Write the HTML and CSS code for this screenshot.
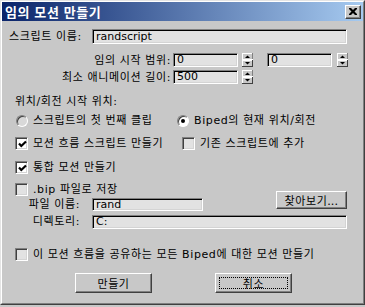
FILE: index.html
```html
<!DOCTYPE html>
<html lang="ko">
<head>
<meta charset="utf-8">
<title>임의 모션 만들기</title>
<link rel="stylesheet" href="styles.css">
</head>
<body>
<div class="window">
  <div class="frame">
    <div class="titlebar">
      <span class="title">임의 모션 만들기</span>
      <div class="close">
        <svg width="8" height="7" viewBox="0 0 8 7"><path d="M0 0h2l2 2 2-2h2v1l-2.5 2.5L8 6v1H6L4 5 2 7H0V6l2.5-2.5L0 1z" fill="#000"/></svg>
      </div>
    </div>
    <div class="content">
      <div class="row row-name">
        <span class="lbl lbl-name">스크립트 이름:</span>
        <div class="tb tb-wide">randscript</div>
      </div>
      <div class="row row-num first-num">
        <span class="lbl lbl-num">임의 시작 범위:</span>
        <div class="tb tb-num">0</div>
        <svg class="spin" width="11" height="14" viewBox="0 0 11 14"><rect width="11" height="14" fill="#c8c8c8"/><path d="M0 0h11M0 0v7" stroke="#fff" stroke-width="2" fill="none"/><path d="M0 6.5h11M10.5 0v7" stroke="#808080" fill="none"/><path d="M0 7h11M0 7v7" stroke="#fff" stroke-width="2" fill="none"/><path d="M0 13.5h11M10.5 7v7" stroke="#404040" fill="none"/><path d="M3 5h5L5.5 2.5z" fill="#000"/><path d="M3 9h5l-2.5 2.5z" fill="#000"/></svg>
        <div class="tb tb-num gap-wide">0</div>
        <svg class="spin spin-b" width="11" height="14" viewBox="0 0 11 14"><rect width="11" height="14" fill="#c8c8c8"/><path d="M0 0h11M0 0v7" stroke="#fff" stroke-width="2" fill="none"/><path d="M0 6.5h11M10.5 0v7" stroke="#808080" fill="none"/><path d="M0 7h11M0 7v7" stroke="#fff" stroke-width="2" fill="none"/><path d="M0 13.5h11M10.5 7v7" stroke="#404040" fill="none"/><path d="M3 5h5L5.5 2.5z" fill="#000"/><path d="M3 9h5l-2.5 2.5z" fill="#000"/></svg>
      </div>
      <div class="row row-num second-num">
        <span class="lbl lbl-num">최소 애니메이션 길이:</span>
        <div class="tb tb-num">500</div>
        <svg class="spin" width="11" height="14" viewBox="0 0 11 14"><rect width="11" height="14" fill="#c8c8c8"/><path d="M0 0h11M0 0v7" stroke="#fff" stroke-width="2" fill="none"/><path d="M0 6.5h11M10.5 0v7" stroke="#808080" fill="none"/><path d="M0 7h11M0 7v7" stroke="#fff" stroke-width="2" fill="none"/><path d="M0 13.5h11M10.5 7v7" stroke="#404040" fill="none"/><path d="M3 5h5L5.5 2.5z" fill="#000"/><path d="M3 9h5l-2.5 2.5z" fill="#000"/></svg>
      </div>
      <div class="row row-section">위치/회전 시작 위치:</div>
      <div class="row row-radio">
        <label class="opt opt-radio1"><span class="radio"></span><span>스크립트의 첫 번째 클립</span></label>
        <label class="opt"><span class="radio on"></span><span>Biped의 현재 위치/회전</span></label>
      </div>
      <div class="row row-check1">
        <label class="opt opt-check1"><span class="check on"><svg width="9" height="9" viewBox="0 0 9 9"><path d="M1 3.5l2.3 2.5L8 1.5" stroke="#000" stroke-width="2.2" fill="none"/></svg></span><span>모션 흐름 스크립트 만들기</span></label>
        <label class="opt"><span class="check"></span><span>기존 스크립트에 추가</span></label>
      </div>
      <div class="row row-check2">
        <label class="opt"><span class="check on"><svg width="9" height="9" viewBox="0 0 9 9"><path d="M1 3.5l2.3 2.5L8 1.5" stroke="#000" stroke-width="2.2" fill="none"/></svg></span><span>통합 모션 만들기</span></label>
      </div>
      <div class="filegrid">
        <label class="opt bip"><span class="check"></span><span>.bip 파일로 저장</span></label>
        <span class="flbl flbl-name">파일 이름:</span>
        <div class="tb tb-file">rand</div>
        <div class="btn btn-browse">찾아보기...</div>
        <span class="flbl flbl-dir">디렉토리:</span>
        <div class="tb tb-dir">C:</div>
      </div>
      <div class="row row-share">
        <label class="opt"><span class="check"></span><span>이 모션 흐름을 공유하는 모든 Biped에 대한 모션 만들기</span></label>
      </div>
      <div class="row row-buttons">
        <div class="btn btn-main">만들기</div>
        <div class="btn btn-main btn-focus"><span class="focus">취소</span></div>
      </div>
    </div>
  </div>
</div>
</body>
</html>
```

FILE: styles.css
```css
html, body {
  margin: 0;
  padding: 0;
  background: #c8c8c8;
}
body {
  width: 365px;
  height: 307px;
  overflow: hidden;
  font-family: "DejaVu Sans", "Noto Sans CJK KR", sans-serif;
  font-size: 11px;
  color: #000;
}
.window {
  box-sizing: border-box;
  width: 365px;
  height: 305px;
  border: 1px solid;
  border-color: #e4e4e4 #404040 #404040 #e4e4e4;
  background: #c8c8c8;
}
.frame {
  box-sizing: border-box;
  height: 100%;
  border: 1px solid;
  border-color: #fff #808080 #808080 #fff;
}
.titlebar {
  height: 19px;
  display: flex;
  align-items: center;
  justify-content: space-between;
  padding: 0 2px 0 3px;
  background: linear-gradient(to right, #0a246a, #a6caf0);
}
.title {
  color: #fff;
  font-family: "Noto Sans CJK KR", sans-serif;
  font-weight: bold;
  font-size: 13px;
  line-height: 15px;
  letter-spacing: 0.6px;
}
.close {
  box-sizing: border-box;
  width: 16px;
  height: 14px;
  background: #c8c8c8;
  border: 1px solid;
  border-color: #fff #404040 #404040 #fff;
  box-shadow: inset -1px -1px 0 #808080;
  display: flex;
  align-items: center;
  justify-content: center;
  padding: 0 1px 1px 0;
}
.close svg { display: block; }

.row {
  display: flex;
  align-items: center;
  line-height: 13px;
  white-space: nowrap;
  letter-spacing: 0.6px;
}
.tb {
  box-sizing: border-box;
  border: 1px solid;
  border-color: #808080 #fff #fff #808080;
  box-shadow: inset 1px 1px 0 #000, inset -1px -1px 0 #d4d4d4;
  background: #e2e2e2;
  padding: 0 0 0 3px;
  font-family: "DejaVu Sans", sans-serif;
  font-size: 11px;
  line-height: 12px;
  letter-spacing: 0;
  display: flex;
  align-items: center;
  overflow: hidden;
}
.row-name { margin-top: 8px; height: 15px; padding-left: 7px; }
.lbl-name { width: 83px; }
.tb-wide { width: 255px; height: 15px; }

.row-num { height: 14px; }
.first-num { margin-top: 9px; }
.second-num { margin-top: 3px; }
.lbl-num { width: 169px; text-align: right; }
.tb-num { width: 65px; height: 14px; margin-left: 2px; }
.spin { display: block; margin-left: 4px; }
.gap-wide { margin-left: 14px; }
.spin-b { margin-left: 5px; }

.row-section { margin-top: 11px; height: 13px; padding-left: 13px; }
.row-radio { margin-top: 6px; height: 13px; padding-left: 14px; }
.opt { display: flex; align-items: center; gap: 5px; }
.opt-radio1 { width: 161px; }
.radio {
  box-sizing: border-box;
  width: 12px;
  height: 12px;
  border-radius: 50%;
  border: 1px solid;
  border-color: #808080 #fff #fff #808080;
  box-shadow: inset 1px 1px 0 #404040;
  background: #d8d8d8;
  display: flex;
  align-items: center;
  justify-content: center;
}
.radio.on { background: #fff; }
.radio.on::after {
  content: "";
  width: 4px;
  height: 4px;
  border-radius: 50%;
  background: #000;
}
.row-check1 { margin-top: 10px; height: 13px; padding-left: 13px; }
.opt-check1 { width: 167px; }
.row-check2 { margin-top: 11px; height: 13px; padding-left: 13px; }
.check {
  box-sizing: border-box;
  width: 13px;
  height: 13px;
  border: 1px solid;
  border-color: #808080 #fff #fff #808080;
  box-shadow: inset 1px 1px 0 #404040, inset -1px -1px 0 #d4d4d4;
  background: #e2e2e2;
  display: flex;
  align-items: center;
  justify-content: center;
  padding: 1px 0 0 1px;
}
.check.on { background: #fff; }
.check svg { display: block; }

.filegrid {
  margin-top: 9px;
  padding-left: 13px;
  display: grid;
  grid-template-columns: 77px 111px 73px 71px;
  grid-template-rows: 15px 17px 14px;
  line-height: 13px;
  white-space: nowrap;
  letter-spacing: 0.6px;
}
.bip { grid-column: 1 / 4; grid-row: 1; align-self: start; height: 13px; }
.flbl { grid-column: 1; text-align: right; padding-right: 12px; align-self: start; }
.flbl-name { grid-row: 2; }
.flbl-dir { grid-row: 3; }
.tb-file { grid-column: 2; grid-row: 2; height: 13px; align-self: start; }
.tb-dir { grid-column: 2 / 5; grid-row: 3; height: 14px; width: 255px; align-self: start; }
.btn-browse { grid-column: 4; grid-row: 1 / 3; align-self: start; margin-top: 8px; height: 18px; }

.btn {
  box-sizing: border-box;
  background: #c8c8c8;
  border: 1px solid;
  border-color: #fff #404040 #404040 #fff;
  box-shadow: inset -1px -1px 0 #808080;
  display: flex;
  align-items: center;
  justify-content: center;
  font-family: "Noto Sans CJK KR", sans-serif;
  font-size: 11px;
  letter-spacing: 0.6px;
}
.row-share { margin-top: 19px; height: 13px; padding-left: 13px; }
.row-buttons { margin-top: 12px; height: 20px; padding-left: 73px; gap: 63px; }
.btn-main { width: 77px; height: 20px; }
.btn-focus { padding: 3px; }
.focus {
  box-sizing: border-box;
  width: 100%;
  height: 100%;
  outline: 1px dotted #000;
  outline-offset: -1px;
  display: flex;
  align-items: center;
  justify-content: center;
}
```
